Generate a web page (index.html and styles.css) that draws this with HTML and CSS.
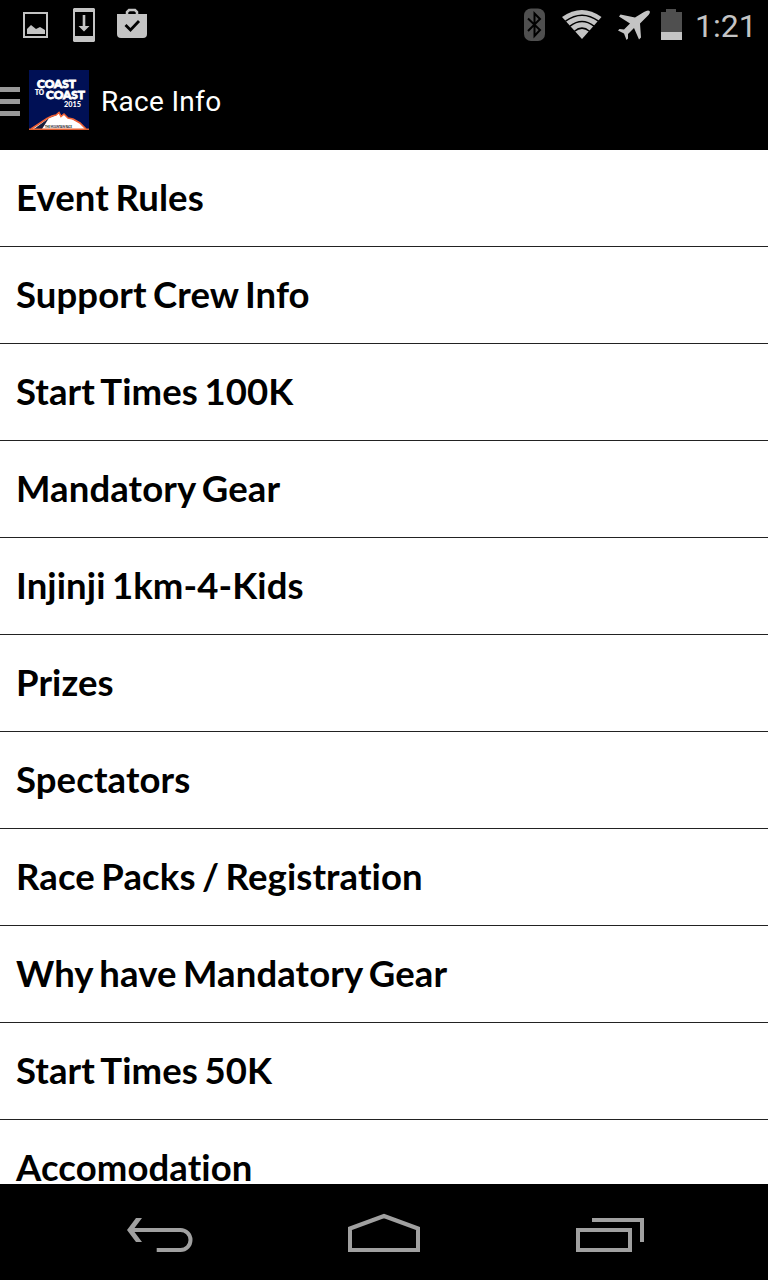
FILE: index.html
```html
<!DOCTYPE html>
<html lang="en">
<head>
  <meta charset="UTF-8">
  <meta name="viewport" content="width=device-width, initial-scale=1.0">
  <title>Race Info</title>
  <link rel="stylesheet" href="styles.css">
</head>
<body>
  <div class="status-bar">
    <svg class="icon-picture" width="25" height="34" viewBox="0 0 25 34">
      <path d="M1 5h23v24H1z" fill="none" stroke="#c4c4c4" stroke-width="2"/>
      <path d="M4 26v-5l4-4 5 4 4-2 5 3v4z" fill="#c4c4c4"/>
    </svg>
    <svg class="icon-download" width="22" height="34" viewBox="0 0 22 34">
      <path fill-rule="evenodd" d="M1 0h20l1 1v32l-1 1H1l-1-1V1zM2 4v24h18V4z" fill="#c4c4c4"/>
      <path d="M9.700 7h2.600v11h4.200L11 23.500 5.500 18h4.200z" fill="#c4c4c4"/>
    </svg>
    <svg class="icon-bag" width="30" height="34" viewBox="0 0 30 34">
      <path d="M10 7V4l2-2h6l2 2v3" fill="none" stroke="#c4c4c4" stroke-width="2.500"/>
      <path d="M0 6h30v20q0 4-4 4H4q-4 0-4-4z" fill="#c4c4c4"/>
      <path d="M8.500 17l5 5L22 13" fill="none" stroke="#000" stroke-width="2.800"/>
    </svg>

    <div class="status-right">
      <svg class="icon-bluetooth" width="21" height="34" viewBox="0 0 21 34">
        <rect y="0.500" width="21" height="32.500" rx="7" fill="#4f4f4f"/>
        <path d="M4 10.500L16 22l-5.500 6V5.500l5.500 5.500L4 23" fill="none" stroke="#000" stroke-width="2"/>
      </svg>
      <svg class="icon-wifi" width="40" height="34" viewBox="0 0 40 34">
        <path d="M0 9Q20-5 39.500 9L20 31z" fill="#c4c4c4"/>
        <path d="M3.500 13.200Q20 1.500 36.500 13.200M8 18.200Q20 9 32 18.200M12.500 23.300Q20 17 27.500 23.300" fill="none" stroke="#000" stroke-width="1.500"/>
      </svg>
      <svg class="icon-plane" width="33" height="34" viewBox="0 0 33 34">
        <path d="M31.500 3q1.200 1-1 4L22 15.500l1 14L21 31.500l-5-11.500-6 6v4.500L8.500 32l-2.500-6.500L0 22.500 1.500 21l4.500.5 6-6L1 8.500 2.500 6.500l14.500 3 9-5.500Q30 1.500 31.500 3z" fill="#c4c4c4"/>
      </svg>
      <svg class="icon-battery" width="21" height="34" viewBox="0 0 21 34">
        <path d="M0 4h5V1h10v3h6v20H0z" fill="#4f4f4f"/>
        <path d="M0 24h21v8H0z" fill="#c4c4c4"/>
      </svg>
      <span class="clock">1:21</span>
    </div>
  </div>

  <header class="action-bar">
    <svg class="menu" width="20" height="30" viewBox="0 0 20 30">
      <path d="M0 2.500h20M0 14.500h20M0 26.500h20" stroke="#999" stroke-width="5"/>
    </svg>
    <svg class="logo" width="60" height="60" viewBox="0 0 60 60">
      <rect width="60" height="60" fill="#001055"/>
      <g class="logo-text" fill="#fff" stroke="#fff">
        <text x="8" y="17.700" font-size="11.500" stroke-width="0.900" textLength="39" lengthAdjust="spacingAndGlyphs">COAST</text>
        <text x="6" y="25" font-size="6.500" stroke-width="0.200" textLength="9" lengthAdjust="spacingAndGlyphs">TO</text>
        <text x="17" y="29" font-size="11.500" stroke-width="0.900" textLength="39" lengthAdjust="spacingAndGlyphs">COAST</text>
        <text x="35" y="36.800" font-size="6.500" stroke-width="0" textLength="17" lengthAdjust="spacingAndGlyphs">2015</text>
      </g>
      <path d="M2 59L19 48l4-1 4-2 3-3 2 4 3-2 4 4 4 1 6 3 2 1 6 6z" fill="#fff"/>
      <path d="M5 59l15-11-7 11z" fill="#171d3b"/>
      <path d="M2 59L18 48.500l5-2.500 4-1 3-2.500 2 4 3-2.500 4 4 5 1 7 4 6 6" fill="none" stroke="#ee6035" stroke-width="1.600"/>
      <path d="M0 59.200h60" stroke="#e56030" stroke-width="1.400"/>
      <text class="logo-text" x="16" y="57.500" font-size="3.500" fill="#222" textLength="27" lengthAdjust="spacingAndGlyphs">THE MOUNTAIN RACE</text>
    </svg>
    <h1>Race Info</h1>
  </header>

  <ul class="info-list">
    <li>Event Rules</li>
    <li>Support Crew Info</li>
    <li>Start Times 100K</li>
    <li>Mandatory Gear</li>
    <li>Injinji 1km-4-Kids</li>
    <li>Prizes</li>
    <li>Spectators</li>
    <li>Race Packs / Registration</li>
    <li>Why have Mandatory Gear</li>
    <li>Start Times 50K</li>
    <li>Accomodation</li>
  </ul>

  <nav class="nav-bar">
    <svg class="icon-back" width="66" height="48" viewBox="0 0 66 48">
      <path d="M5 22h49.500a10 10 0 0 1 0 20H30.700" fill="none" stroke="#a0a0a0" stroke-width="4"/>
      <path d="M16 10h-6L1 22l9 12h6L7 22z" fill="#a0a0a0"/>
    </svg>
    <svg width="72" height="48" viewBox="0 0 72 48">
      <path d="M2 42V20.500L36 8l34 12.500V42z" fill="none" stroke="#a0a0a0" stroke-width="4"/>
    </svg>
    <svg width="72" height="48" viewBox="0 0 72 48">
      <path d="M2 22h52v20H2zM16 12h50v22" fill="none" stroke="#a0a0a0" stroke-width="4"/>
    </svg>
  </nav>
</body>
</html>
```
FILE: styles.css
```css
body {
  margin: 0;
  height: 1280px;
  display: flex;
  flex-direction: column;
  overflow: hidden;
  background-color: #000;
  font-family: Roboto, sans-serif;
}
svg {
  display: block;
  flex-shrink: 0;
}
.status-bar {
  display: flex;
  height: 42px;
  padding: 8px 16px 0 23px;
}
.icon-download {
  margin-left: 25px;
}
.icon-bag {
  margin-left: 22px;
}
.status-right {
  display: flex;
  margin-left: auto;
}
.icon-wifi {
  margin-left: 17px;
}
.icon-plane {
  margin-left: 16px;
}
.icon-battery {
  margin-left: 10px;
}
.clock {
  width: 57px;
  margin-left: 13px;
  color: #c4c4c4;
  font-size: 32px;
  font-weight: 400;
  line-height: 36px;
  white-space: nowrap;
}
.action-bar {
  display: flex;
  align-items: center;
  height: 100px;
}
.menu {
  margin-top: 4px;
}
.logo {
  margin-left: 9px;
}
.logo-text {
  font-family: Lato, sans-serif;
  font-weight: 900;
}
.action-bar h1 {
  margin: 3px 0 0 12px;
  color: #fff;
  font-size: 28px;
  font-weight: 400;
  letter-spacing: 0.3px;
}
.info-list {
  flex: 1;
  min-height: 0;
  margin: 0;
  padding: 0;
  overflow: hidden;
  list-style: none;
  background-color: #fff;
}
.info-list li {
  height: 96px;
  padding-left: 16px;
  border-bottom: 1px solid #222;
  color: #000;
  font-family: Lato, sans-serif;
  font-size: 36.5px;
  font-weight: 700;
  font-variant-ligatures: none;
  line-height: 94px;
  letter-spacing: 0.1px;
  word-spacing: -2.5px;
}
.nav-bar {
  display: flex;
  align-items: center;
  gap: 156px;
  height: 96px;
  padding-left: 126px;
}
.icon-back {
  overflow: visible;
}
```
